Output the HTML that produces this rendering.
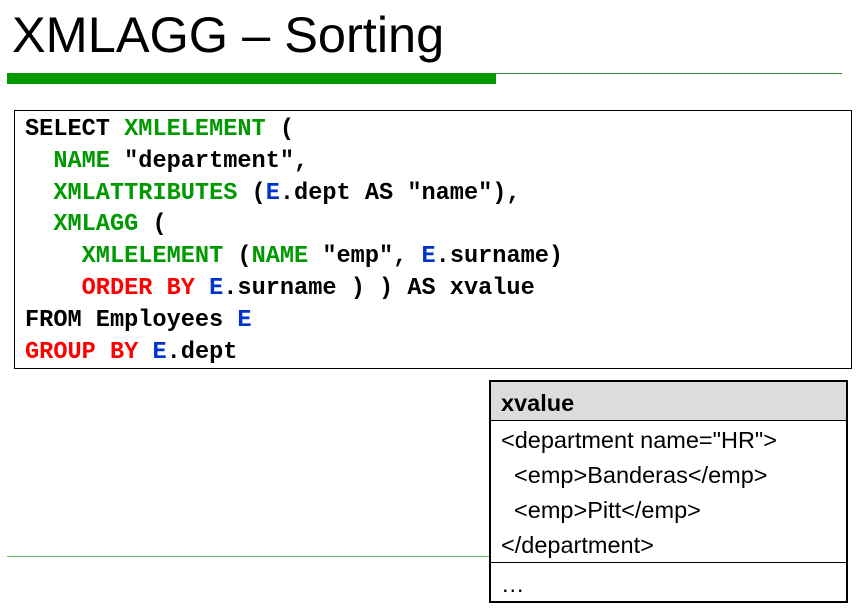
<!DOCTYPE html><html><head><style>
body{margin:0;width:866px;height:613px;background:#fff;position:relative;overflow:hidden;font-family:"Liberation Sans",sans-serif}
.t{position:absolute;left:12px;top:5px;font-size:50.5px;color:#000;white-space:nowrap}
.code{position:absolute;left:14px;top:110px;width:838px;height:259px;border:1px solid #000;box-sizing:border-box}
.code pre{margin:0;position:absolute;left:10px;top:3px;font-family:"Liberation Mono",monospace;font-weight:bold;font-size:23.6px;line-height:31.8px;color:#000}
.g{color:#009900}.r{color:#ff0000}.b{color:#0033cc}
.tb{position:absolute;left:489px;top:380px;width:359px;height:223px;border:2px solid #000;box-sizing:border-box;font-size:23.5px}
.tb div{padding-left:10px;box-sizing:border-box}
</style></head><body>
<div class="t">XMLAGG – Sorting</div>
<div style="position:absolute;left:7px;top:73px;width:489px;height:11px;background:#009900"></div>
<div style="position:absolute;left:496px;top:73px;width:346px;height:1px;background:#3a8a3a"></div>
<div style="position:absolute;left:7px;top:556px;width:483px;height:1px;background:#66bb66"></div>
<div class="code"><pre>SELECT <span class="g">XMLELEMENT</span> (
  <span class="g">NAME</span> "department",
  <span class="g">XMLATTRIBUTES</span> (<span class="b">E</span>.dept AS "name"),
  <span class="g">XMLAGG</span> (
    <span class="g">XMLELEMENT</span> (<span class="g">NAME</span> "emp", <span class="b">E</span>.surname)
    <span class="r">ORDER BY</span> <span class="b">E</span>.surname ) ) AS xvalue
FROM Employees <span class="b">E</span>
<span class="r">GROUP BY</span> <span class="b">E</span>.dept</pre></div>
<div class="tb">
<div style="height:39px;background:#dcdcdc;border-bottom:1px solid #000;font-weight:bold;line-height:42px">xvalue</div>
<div style="line-height:35px;height:142px;border-bottom:1px solid #000;padding-top:2px">&lt;department name="HR"&gt;<br>&nbsp;&nbsp;&lt;emp&gt;Banderas&lt;/emp&gt;<br>&nbsp;&nbsp;&lt;emp&gt;Pitt&lt;/emp&gt;<br>&lt;/department&gt;</div>
<div style="line-height:42px">…</div>
</div>
</body></html>
